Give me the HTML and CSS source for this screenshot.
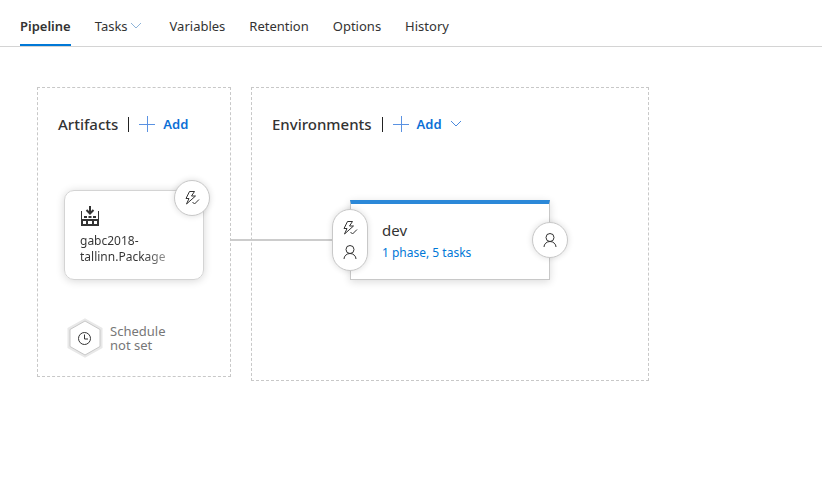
FILE: index.html
```html
<!DOCTYPE html>
<html lang="en">
<head>
<meta charset="utf-8">
<meta name="viewport" content="width=device-width, initial-scale=1">
<title>Release pipeline</title>
<link rel="stylesheet" href="styles.css">
</head>
<body>
<svg class="sprite" aria-hidden="true">
  <symbol id="bolt" viewBox="0 0 16 16"><path d="M5.500 1.500h5L7.500 6h4L2.500 14l2.500-5.500H2zM8.500 12l2 2 4.500-4.500"/></symbol>
  <symbol id="person" viewBox="0 0 16 16"><circle cx="8" cy="5.500" r="4"/><path d="M2 15a6 5.500 0 0 1 12 0"/></symbol>
  <symbol id="plus" viewBox="0 0 16 16"><path d="M0 8.500h16M8.500 0v16"/></symbol>
  <symbol id="chevron" viewBox="0 0 12 8"><path d="M1 1l5 5 5-5"/></symbol>
</svg>
<nav class="tabs">
  <a class="tab tab-active" href="#pipeline" aria-current="page">Pipeline</a>
  <a class="tab tab-menu" href="#tasks">Tasks<svg class="chevron chevron-tab"><use href="#chevron"/></svg></a>
  <a class="tab" href="#variables">Variables</a>
  <a class="tab" href="#retention">Retention</a>
  <a class="tab" href="#options">Options</a>
  <a class="tab" href="#history">History</a>
</nav>
<main class="canvas">
  <section class="panel artifacts">
    <header class="panel-head">
      <h2>Artifacts</h2>
      <button class="add" type="button"><svg class="plus"><use href="#plus"/></svg>Add</button>
    </header>
    <div class="artifact">
      <svg class="build" viewBox="0 0 18 20" aria-hidden="true">
        <path class="build-arrow" d="M9 0v7M5.500 4L9 7.500 12.500 4"/>
        <path class="build-body" d="M0 5h1v8h16V5h1v15H0zM3 10h3v2H3zM7.500 10h3v2h-3zM12 10h3v2h-3z"/>
        <path class="build-door" d="M2 15h3v3H2zM7 15h4v3H7zM13 15h3v3h-3z"/>
      </svg>
      <div class="artifact-name">gabc2018-<br>tallinn.Package</div>
      <button class="badge badge-trigger" type="button" aria-label="Continuous deployment trigger"><svg class="icon"><use href="#bolt"/></svg></button>
    </div>
    <button class="schedule" type="button">
      <svg class="hexagon" viewBox="0 0 36 40" aria-hidden="true">
        <path class="hex-halo" d="M18 2l16 9v18l-16 9-16-9V11z"/>
        <path class="hex-face" d="M18 3l15 8.500v17L18 37 3 28.500v-17z"/>
        <circle class="clock" cx="17.500" cy="20.500" r="6"/>
        <path class="clock" d="M17.500 16.500v4.500h3.500"/>
      </svg>
      <span>Schedule<br>not set</span>
    </button>
  </section>
  <section class="panel environments">
    <header class="panel-head">
      <h2>Environments</h2>
      <button class="add" type="button"><svg class="plus"><use href="#plus"/></svg>Add<svg class="chevron chevron-add"><use href="#chevron"/></svg></button>
    </header>
    <div class="flow">
      <div class="connector"></div>
      <div class="environment">
        <h3>dev</h3>
        <a href="#tasks">1 phase, 5 tasks</a>
        <button class="badge badge-pre" type="button" aria-label="Pre-deployment conditions"><svg class="icon"><use href="#bolt"/></svg><svg class="icon"><use href="#person"/></svg></button>
        <button class="badge badge-post" type="button" aria-label="Post-deployment conditions"><svg class="icon"><use href="#person"/></svg></button>
      </div>
    </div>
  </section>
</main>
</body>
</html>
```
FILE: styles.css
```css
* { box-sizing: border-box; }

body {
  margin: 0;
  background: #fff;
  color: #333;
  font: 13px/18px "Noto Sans", "Open Sans", sans-serif;
}

button {
  padding: 0;
  border: 0;
  background: none;
  color: inherit;
  font: inherit;
  cursor: pointer;
}

a { color: #0078d7; text-decoration: none; }

svg { display: block; flex: none; fill: none; stroke: currentColor; }

.sprite { position: absolute; width: 0; height: 0; }

/* Tabs */
.tabs {
  display: flex;
  gap: 24px;
  height: 47px;
  padding: 0 20px;
  border-bottom: 1px solid #d4d4d4;
}

.tab {
  display: flex;
  align-items: center;
  height: 46px;
  padding-top: 8px;
  border-bottom: 2px solid transparent;
  color: #333;
}

.tab-active { border-color: #0078d7; font-weight: 600; }

.chevron { width: 12px; height: 8px; }
.chevron-tab { margin: 0 4px 0 2px; color: #8fb4d8; }
.chevron-add { margin-left: 8px; color: #4a8ade; }

/* Canvas */
.canvas {
  display: grid;
  grid-template-columns: 194px minmax(320px, 398px);
  align-items: start;
  gap: 20px;
  padding: 40px 36px 40px 37px;
}

.panel { padding: 26px 20px 18px; border: 1px dashed #c8c8c8; }

.panel-head { display: flex; align-items: center; height: 20px; }

h2 {
  margin: 0;
  font-size: 15px;
  line-height: 20px;
  font-weight: 500;
}

.add {
  display: flex;
  align-items: center;
  margin-left: 10px;
  color: #0b6fd6;
  font-weight: 600;
}

.add::before {
  width: 1px;
  height: 15px;
  margin-right: 10px;
  background: #222;
  content: "";
}

.plus { width: 16px; height: 16px; margin-right: 8px; color: #5a92e2; }

.icon { width: 16px; height: 16px; }

.badge {
  position: absolute;
  display: flex;
  flex-direction: column;
  align-items: center;
  justify-content: center;
  gap: 8px;
  width: 36px;
  height: 36px;
  border: 1px solid #c8c8c8;
  border-radius: 18px;
  background: #fff;
  box-shadow: 0 0 6px rgba(0, 0, 0, .14);
}

/* Artifacts */
.artifact {
  position: relative;
  width: 140px;
  height: 90px;
  margin: 56px 0 0 6px;
  padding: 15px;
  border: 1px solid #d4d4d4;
  border-radius: 10px;
  box-shadow: 0 1px 8px rgba(0, 0, 0, .16);
}

.build { width: 18px; height: 20px; margin-left: 1px; stroke: none; }
.build-arrow { stroke: #333; stroke-width: 2; }
.build-body { fill: #333; }
.build-door { fill: #fff; }

.artifact-name {
  width: 90px;
  margin-top: 7px;
  overflow: hidden;
  font-size: 12px;
  line-height: 16px;
  background: linear-gradient(90deg, #333 70%, #aaa) text;
  color: transparent;
}

.badge-trigger { top: -11px; right: -7px; }

.schedule {
  display: flex;
  align-items: center;
  gap: 7px;
  margin: 38px 0 0 9px;
  color: #777;
  line-height: 14px;
  text-align: left;
}

.hexagon { width: 36px; height: 40px; }
.hex-halo { stroke: #e8e8e8; stroke-width: 3; }
.hex-face { fill: #fff; stroke: #c8c8c8; }
.clock { stroke: #333; }

/* Environments */
.flow {
  display: flex;
  align-items: center;
  margin: 66px 0 82px -41px;
}

.connector { width: 119px; height: 2px; background: #ccc; }

.environment {
  position: relative;
  width: 200px;
  height: 80px;
  padding: 16px 31px;
  border: 1px solid #c8c8c8;
  border-top: 4px solid #2b88d8;
  background: #fff;
  box-shadow: 0 2px 8px rgba(0, 0, 0, .14);
}

.environment h3 {
  margin: 0 0 5px;
  font-size: 15px;
  line-height: 20px;
  font-weight: 400;
}

.environment a { display: block; font-size: 12px; line-height: 16px; }

.badge-pre { top: 5px; left: -19px; height: 62px; }
.badge-post { top: 18px; right: -19px; }
```
